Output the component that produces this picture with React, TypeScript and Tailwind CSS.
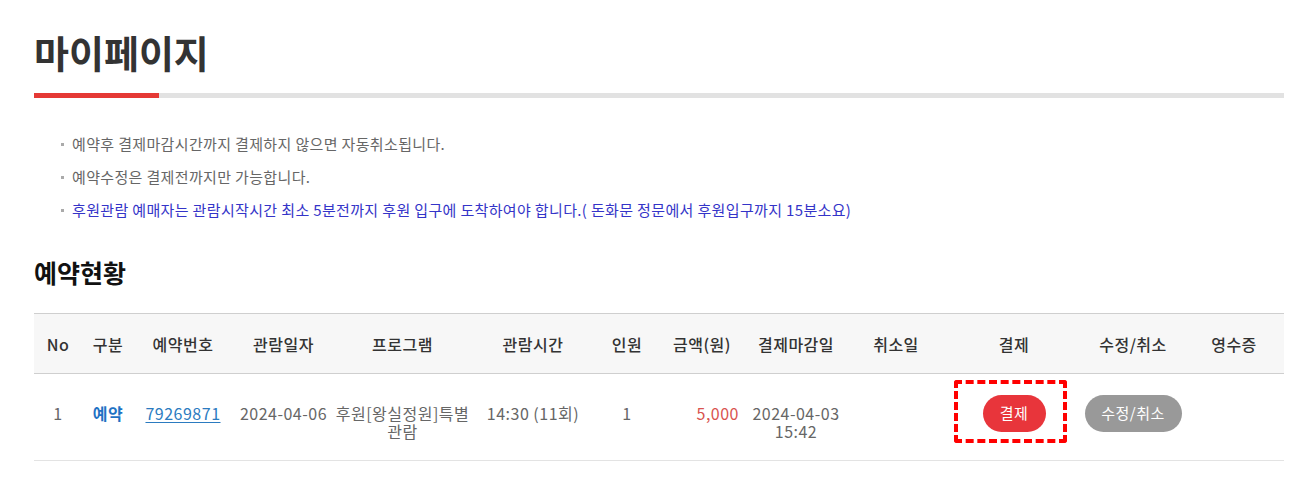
import React from 'react';

const font = { fontFamily: '"Noto Sans CJK KR", "Noto Sans", sans-serif' };

const notices = [
  { text: '예약후 결제마감시간까지 결제하지 않으면 자동취소됩니다.', blue: false },
  { text: '예약수정은 결제전까지만 가능합니다.', blue: false },
  {
    text: '후원관람 예매자는 관람시작시간 최소 5분전까지 후원 입구에 도착하여야 합니다.( 돈화문 정문에서 후원입구까지 15분소요)',
    blue: true,
  },
];

const columns = [
  { label: 'No', w: 'w-[48px]' },
  { label: '구분', w: 'w-[52px]' },
  { label: '예약번호', w: 'w-[98px]' },
  { label: '관람일자', w: 'w-[103px]' },
  { label: '프로그램', w: 'w-[135px]' },
  { label: '관람시간', w: 'w-[126px]' },
  { label: '인원', w: 'w-[62px]' },
  { label: '금액(원)', w: 'w-[88px]' },
  { label: '결제마감일', w: 'w-[100px]' },
  { label: '취소일', w: 'w-[100px]' },
  { label: '결제', w: 'w-[136px]' },
  { label: '수정/취소', w: 'w-[102px]' },
  { label: '영수증', w: 'w-[100px]' },
];

export default function App() {
  const td = 'align-top pt-[30px] pb-[20px] text-center leading-[18px]';

  return (
    <div className="min-h-[479px] w-full bg-white px-[34px] pt-[26px] text-[#666]" style={font}>
      {/* page title */}
      <h1 className="text-[38px] font-bold leading-[52px] text-[#333]">마이페이지</h1>
      <div className="mt-[15px] flex h-[5px] w-[1250px] bg-[#e2e2e2]">
        <div className="h-full w-[125px] bg-[#e53935]" />
      </div>

      {/* notices */}
      <ul className="mt-[36px] flex flex-col gap-[13px] pl-[27px]">
        {notices.map((n) => (
          <li
            key={n.text}
            className={`flex items-center gap-[8px] text-[15px] leading-[20px] tracking-[0.35px] ${
              n.blue ? 'text-[#3434c8]' : 'text-[#666]'
            }`}
          >
            <span className="h-[3px] w-[3px] bg-[#aaa]" />
            {n.text}
          </li>
        ))}
      </ul>

      {/* reservation status */}
      <h2 className="mt-[36px] text-[25px] font-bold leading-[32px] text-[#111]">예약현황</h2>

      <table className="mt-[25px] w-[1250px] table-fixed border-collapse text-[16px] tracking-[0.5px]">
        <thead>
          <tr className="h-[60px] border-t border-b border-[#cfcfcf] bg-[#f7f7f7]">
            {columns.map((c) => (
              <th key={c.label} className={`${c.w} text-center font-medium text-[#333]`}>
                {c.label}
              </th>
            ))}
          </tr>
        </thead>
        <tbody>
          <tr className="border-b border-[#e3e3e3]">
            <td className={td}>1</td>
            <td className={`${td} font-bold text-[#1f72c4]`}>예약</td>
            <td className={td}>
              <a className="text-[#2b7bc0] underline underline-offset-2">79269871</a>
            </td>
            <td className={td}>2024-04-06</td>
            <td className={td}>후원[왕실정원]특별 관람</td>
            <td className={td}>14:30 (11회)</td>
            <td className={td}>1</td>
            <td className={`${td} pr-[7px] text-right text-[#d9534f]`}>5,000</td>
            <td className={td}>
              2024-04-03
              <br />
              15:42
            </td>
            <td className={td} />
            <td className="pt-[21px] align-top text-center">
              <span className="relative inline-block">
                <button className="h-[37px] w-[63px] rounded-full bg-[#e8353b] text-[15px] text-white">
                  결제
                </button>
                <span className="absolute -top-[15px] -right-[21px] -bottom-[11px] -left-[29px] rounded-[3px] border-4 border-dashed border-[#ff0000]" />
              </span>
            </td>
            <td className="pt-[21px] align-top text-center">
              <button className="h-[37px] w-[97px] rounded-full bg-[#999] text-[15px] text-white">
                수정/취소
              </button>
            </td>
            <td className={td} />
          </tr>
        </tbody>
      </table>
    </div>
  );
}
